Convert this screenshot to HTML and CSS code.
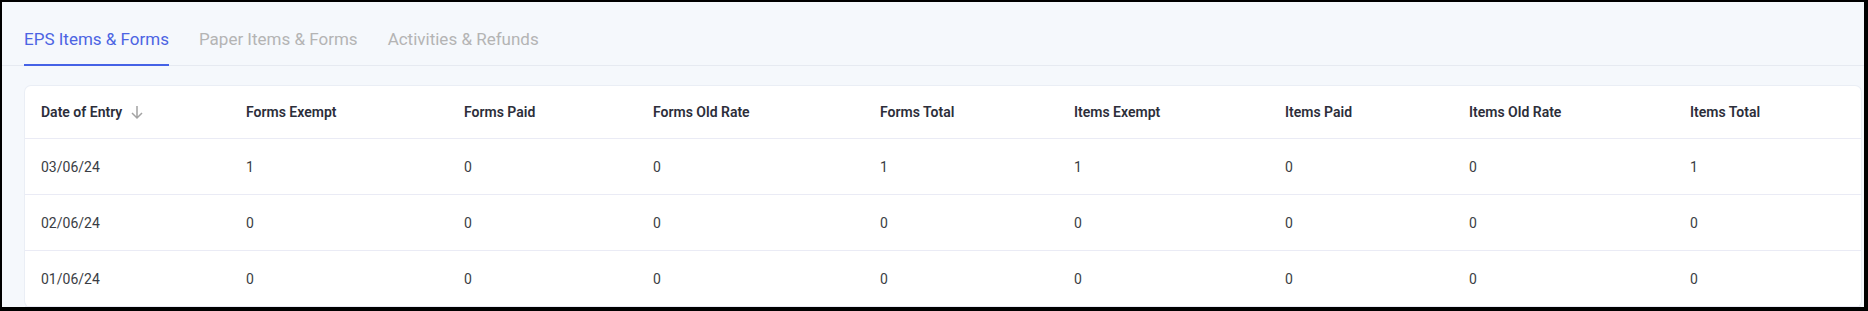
FILE: index.html
```html
<!DOCTYPE html>
<html lang="en">

<head>
  <meta charset="UTF-8">
  <meta name="viewport" content="width=device-width, initial-scale=1.0">
  <title>Items &amp; Forms</title>
  <link rel="stylesheet" href="styles.css">
</head>

<body>
  <div class="frame">
    <div class="tabs">
      <div class="tab active">EPS Items &amp; Forms</div>
      <div class="tab">Paper Items &amp; Forms</div>
      <div class="tab">Activities &amp; Refunds</div>
    </div>

    <div class="card">
      <table class="grid">
        <colgroup>
          <col class="c-date">
          <col class="c-fex">
          <col class="c-fpaid">
          <col class="c-fold">
          <col class="c-ftotal">
          <col class="c-iex">
          <col class="c-ipaid">
          <col class="c-iold">
          <col class="c-itotal">
        </colgroup>
        <thead>
          <tr>
            <th>
              <span class="sort">Date of Entry
                <svg width="16" height="16" viewBox="0 0 16 16" fill="none" stroke="#a3a3a3" stroke-width="1.5">
                  <path d="M8 2v12M3 9l5 5 5-5" />
                </svg>
              </span>
            </th>
            <th>Forms Exempt</th>
            <th>Forms Paid</th>
            <th>Forms Old Rate</th>
            <th>Forms Total</th>
            <th>Items Exempt</th>
            <th>Items Paid</th>
            <th>Items Old Rate</th>
            <th>Items Total</th>
          </tr>
        </thead>
        <tbody>
          <tr>
            <td>03/06/24</td>
            <td>1</td>
            <td>0</td>
            <td>0</td>
            <td>1</td>
            <td>1</td>
            <td>0</td>
            <td>0</td>
            <td>1</td>
          </tr>
          <tr>
            <td>02/06/24</td>
            <td>0</td>
            <td>0</td>
            <td>0</td>
            <td>0</td>
            <td>0</td>
            <td>0</td>
            <td>0</td>
            <td>0</td>
          </tr>
          <tr>
            <td>01/06/24</td>
            <td>0</td>
            <td>0</td>
            <td>0</td>
            <td>0</td>
            <td>0</td>
            <td>0</td>
            <td>0</td>
            <td>0</td>
          </tr>
        </tbody>
      </table>
    </div>
  </div>
</body>

</html>
```

FILE: styles.css
```css
body {
  font-family: Roboto, "Liberation Sans", Arial, sans-serif;
  margin: 0;
  background-color: #000;
}

.frame {
  height: 311px;
  box-sizing: border-box;
  border-style: solid;
  border-color: #000;
  border-width: 2px 4px 4px 2px;
  background-color: #f5f8fc;
  overflow: hidden;
}

/* tab bar */
.tabs {
  display: flex;
  gap: 30px;
  padding-left: 22px;
  border-bottom: 1px solid #e6eaf1;
}

.tab {
  padding: 27px 0 15px;
  line-height: 20px;
  font-size: 17px;
  color: #b4b4b4;
  border-bottom: 2px solid transparent;
  margin-bottom: -1px;
}

.tab.active {
  color: #4c64e3;
  border-bottom-color: #4562e6;
}

/* table card */
.card {
  margin: 20px 3px 0 23px;
  background: #fff;
  border-radius: 6px;
  box-shadow: 0 0 0 1px #eaeef5;
}

.grid {
  width: 100%;
  table-layout: fixed;
  border-collapse: collapse;
  font-size: 14px;
}

.c-date { width: 205px; }
.c-fex { width: 218px; }
.c-fpaid { width: 189px; }
.c-fold { width: 227px; }
.c-ftotal { width: 194px; }
.c-iex { width: 211px; }
.c-ipaid { width: 184px; }
.c-iold { width: 221px; }
.c-itotal { width: 187px; }

th,
td {
  text-align: left;
  padding: 0 16px;
  border-bottom: 1px solid #eaebf5;
  white-space: nowrap;
}

th {
  height: 52px;
  font-weight: 600;
  color: #2c2e3a;
}

td {
  height: 55px;
  color: #3a3d44;
}

.sort {
  display: inline-flex;
  align-items: center;
  gap: 7px;
}
```
